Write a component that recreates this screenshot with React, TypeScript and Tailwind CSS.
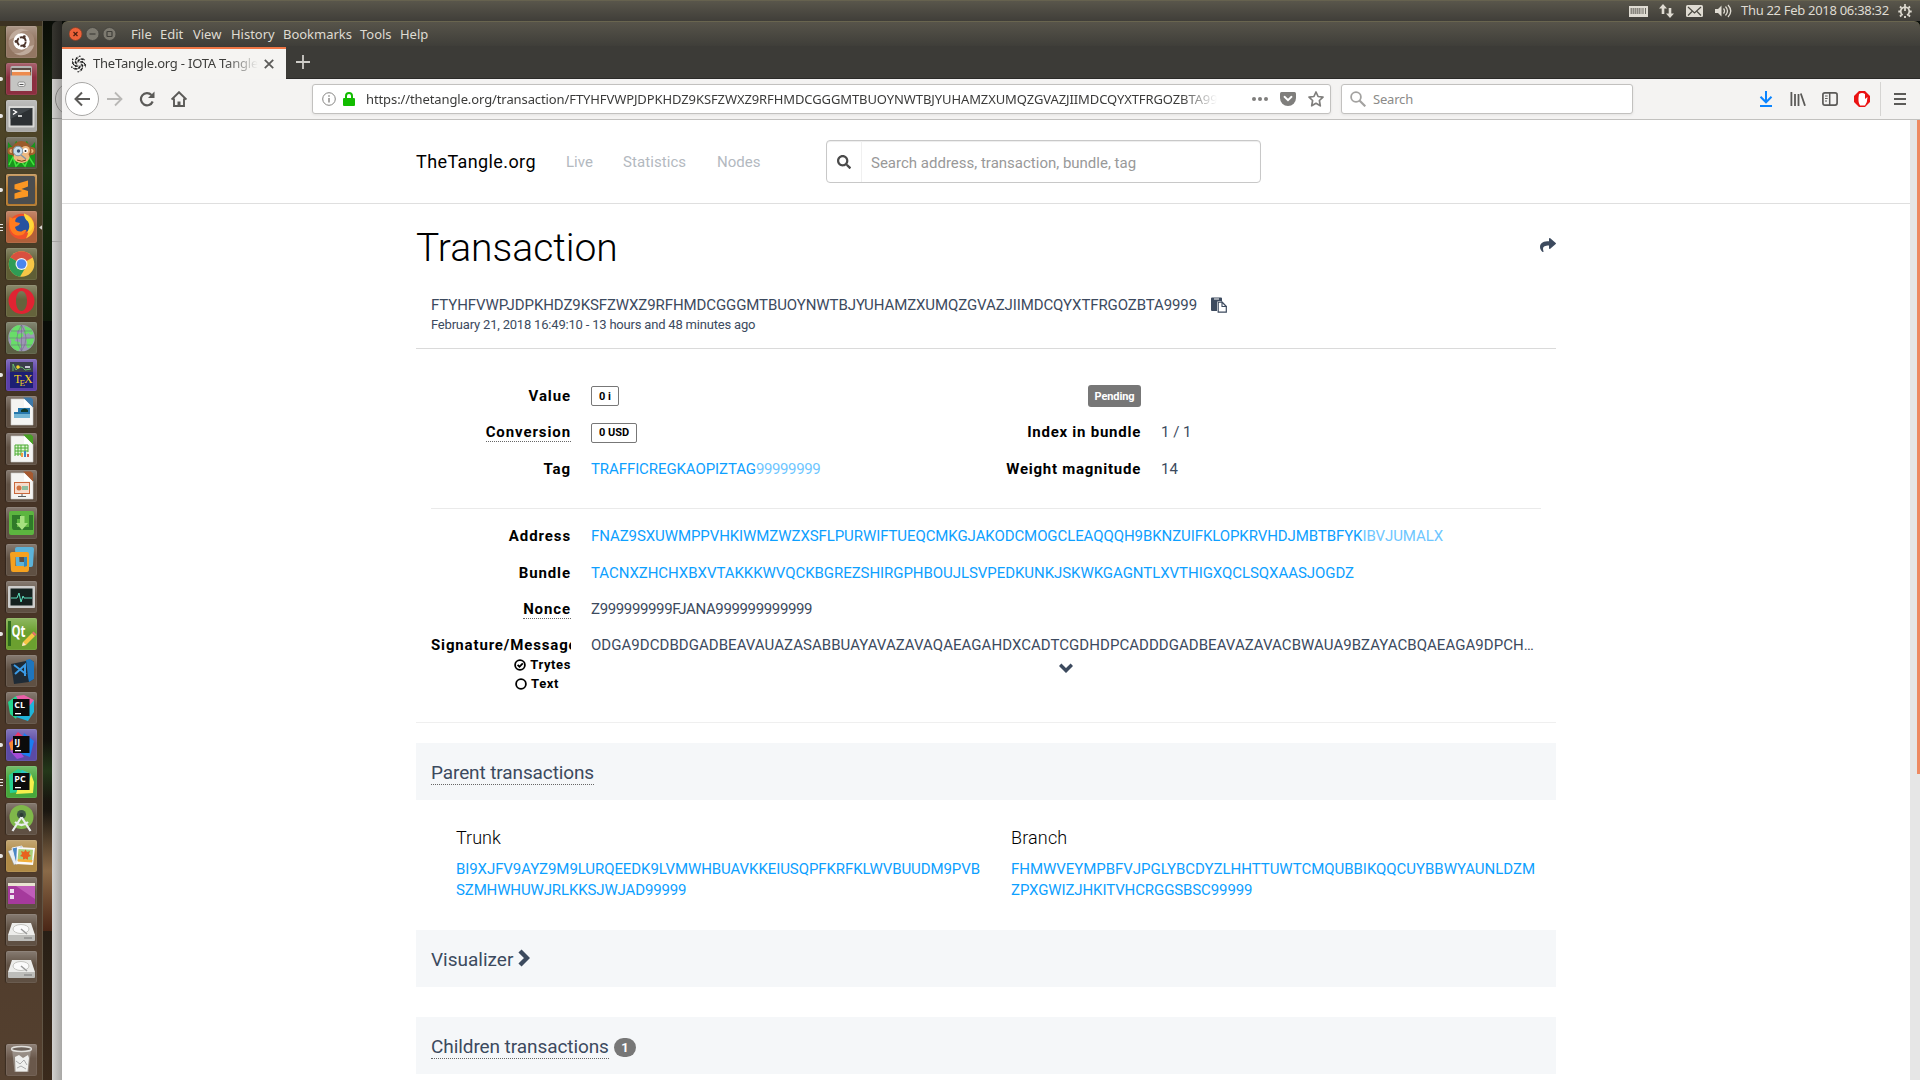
import React from "react";
import { FaSearch, FaShare } from "react-icons/fa";

const HASH = "FTYHFVWPJDPKHDZ9KSFZWXZ9RFHMDCGGGMTBUOYNWTBJYUHAMZXUMQZGVAZJIIMDCQYXTFRGOZBTA9999";

/* ---------- launcher ---------- */

type Running = "none" | "one" | "many";
type LauncherItem = { name: string; bg: string; running?: Running; art: React.ReactNode };

const glass = "bg-[#5f5043]";

const Doc = ({ fold, children }: { fold: string; children: React.ReactNode }) => (
  <>
    <path d="M5 3h14l8 8v18H5z" fill="#f4f4f2" stroke="#c9c9c6" strokeWidth=".6" />
    <path d="M17 1.500l10 10V3.500L25 1.500z" fill={fold} />
    <path d="M18 3v8h8z" fill="#fff" />
    {children}
  </>
);

const Disk = () => (
  <>
    <path d="M6 9h19l4 12H2z" fill="#ececea" />
    <path d="M2 21h27v5q0 1-1 1H3q-1 0-1-1z" fill="#bdbdba" />
    <ellipse cx="15" cy="15" rx="8" ry="4.500" fill="#fafafa" stroke="#c4c4c0" />
    <path d="M15 15l6 5" stroke="#999" strokeWidth="1.500" />
    <path d="M18 24h8" stroke="#777" />
  </>
);

const JetBox = ({ label }: { label: string }) => (
  <>
    <rect x="7" y="7" width="16.500" height="17" fill="#0b0b0b" />
    <text x="8.300" y="15.500" fontSize="9" fontWeight="700" fontFamily="Open Sans, sans-serif" fill="#fff">
      {label}
    </text>
    <rect x="9" y="21" width="6" height="1.300" fill="#fff" />
  </>
);

const launcher: LauncherItem[] = [
  {
    name: "Dash", bg: "bg-[#927662]",
    art: (
      <>
        <circle cx="15.500" cy="16" r="13" fill="#a58b79" />
        <path d="M3 14a13 13 0 0 1 20-9q-9-1-12 5zM28 19a13 13 0 0 1-20 8q10 1 13-6z" fill="#bfab9c" />
        <circle cx="15.500" cy="15.500" r="8.200" fill="#fff" />
        <circle cx="15.500" cy="15.500" r="4.200" fill="none" stroke="#4c352c" strokeWidth="1.900" strokeDasharray="7.600 1.200" />
        <circle cx="10" cy="15.500" r="1.400" fill="#4c352c" />
        <circle cx="18.300" cy="10.700" r="1.400" fill="#4c352c" />
        <circle cx="18.300" cy="20.300" r="1.400" fill="#4c352c" />
      </>
    ),
  },
  {
    name: "Files", bg: "bg-[#8c2f40]", running: "one",
    art: (
      <>
        <rect x="4.500" y="3" width="21.500" height="25" rx="1.500" fill="#b4b4b2" />
        <rect x="5.500" y="5" width="19.500" height="9" fill="#5a4a42" />
        <path d="M6 7h18v2H6z" fill="#f5e9dd" />
        <path d="M6 9h18.500v5H6z" fill="#ee8b4d" />
        <path d="M4.500 12.500h21.500V28H4.500z" fill="#c5c5c3" />
        <rect x="12" y="19" width="7" height="4.500" rx="1.500" fill="#f4f4f4" stroke="#7c7c7a" strokeWidth=".8" />
        <path d="M13.500 21.500h4" stroke="#555" />
      </>
    ),
  },
  {
    name: "Terminal", bg: "bg-[#a9a9a7]", running: "one",
    art: (
      <>
        <rect x="2.500" y="6" width="26" height="21.500" rx="1" fill="#d8d8d6" />
        <rect x="4.500" y="8" width="22" height="17.500" fill="#2c3033" />
        <path d="M4.500 8h22l-22 11z" fill="#41464a" />
        <path d="M7 10l3.500 2L7 14.500M12 16h4" stroke="#fff" strokeWidth="1.400" fill="none" />
      </>
    ),
  },
  {
    name: "Monkey", bg: "bg-[#565240]",
    art: (
      <>
        <path d="M2 30V5l5 6 3-7 5 4 6-4 3 7 5-6v25z" fill="#18951c" />
        <path d="M3 28l4-8 3 9 5-5 4 5 4-9 5 8" fill="none" stroke="#42e33e" strokeWidth="1.500" />
        <circle cx="5.500" cy="14" r="4" fill="#a4622e" />
        <circle cx="5.500" cy="14" r="2" fill="#edb981" />
        <circle cx="25.500" cy="14" r="4" fill="#a4622e" />
        <circle cx="25.500" cy="14" r="2" fill="#edb981" />
        <circle cx="15.500" cy="14" r="10" fill="#9b5b2a" />
        <circle cx="19.500" cy="13.500" r="4.500" fill="#edb981" />
        <ellipse cx="15.500" cy="20" rx="8" ry="6" fill="#edb981" />
        <circle cx="12" cy="14" r="4.800" fill="#c9dcea" stroke="#7f93a3" />
        <path d="M15 18l5 4" stroke="#7f93a3" strokeWidth="1.400" />
        <circle cx="19.500" cy="13.500" r="2.500" fill="#fff" />
        <circle cx="12.500" cy="14" r="1.700" fill="#3c5070" />
        <circle cx="19.500" cy="14" r="1" fill="#222" />
        <path d="M11 23q5 2.500 9 0" stroke="#7b3b18" fill="none" />
      </>
    ),
  },
  {
    name: "Sublime", bg: "bg-[#b57a2f]", running: "one",
    art: (
      <>
        <rect x="2" y="2" width="27" height="28" rx="1.500" fill="#4b4d4f" />
        <path d="M8.500 10.500L22 6.500v6l-6.500 2.500 6.500 2v5.500L8.500 25v-5.500L16 17l-7.500-2z" fill="#fb9723" />
      </>
    ),
  },
  {
    name: "Firefox", bg: "bg-[#b0603a]", running: "many",
    art: (
      <>
        <circle cx="15.500" cy="15.500" r="12.800" fill="#f0502a" />
        <path d="M18 2.500q10.500 3 10.300 13.500-.6 8-8.300 11.500 4-8 2-14z" fill="#ffc02e" />
        <circle cx="16" cy="13.500" r="8.500" fill="#27529f" />
        <path d="M3.500 6q2 .5 3 1.500 2-1 4.500-1-2.500 2-1.500 4.500l4.500 1-1 2-4 2q1 5 6.500 4.500 3-2.500 5-1.500-2 6-9 5.500Q2 23 3.500 6z" fill="#ff7b1d" />
        <path d="M18 2.500q0 5 4 8 3 5-1 11.500 6-2.500 6.500-9-2-7-9.500-10.500z" fill="#ffd739" />
      </>
    ),
  },
  {
    name: "Chrome", bg: "bg-[#5f5e35]",
    art: (
      <>
        <circle cx="15.500" cy="16" r="12.800" fill="#f6c646" />
        <path d="M15.500 16L4.400 9.600a12.800 12.800 0 0 1 22.200 0z" fill="#d95040" />
        <path d="M15.500 16L4.400 9.600a12.800 12.800 0 0 0 9.600 19.100l6-10z" fill="#2f9c55" />
        <circle cx="15.500" cy="16" r="6" fill="#f3f3f3" />
        <circle cx="15.500" cy="16" r="4.800" fill="#4a85ee" />
      </>
    ),
  },
  {
    name: "Opera", bg: "bg-[#65633c]",
    art: (
      <path fillRule="evenodd" d="M15.500 3a13 13 0 1 0 .01 0zM15.500 6c3.500 0 5.500 4.500 5.500 10s-2 10-5.500 10S10 21.500 10 16s2-10 5.500-10z" fill="#e02332" />
    ),
  },
  {
    name: "Globe", bg: "bg-[#5c6045]",
    art: (
      <>
        <circle cx="15.500" cy="16" r="13.300" fill="#9d97b4" />
        <path d="M3.500 12q3-8 9-9l4 2-2 3-4 1 1 3 5-1 1 3-4 3-3-1-2 3 5 1 2 4-3 5q-5-1-8-6l1-4-2-3zM18 4q8 1 9.500 8l-3 1-2-2-3 2-2-3 2-2zM20 17l8-1q0 7-6 10.500l-2-3 1-3z" fill="#69dd69" />
        <path d="M2.500 16h26M5 9h21M5 23h21M15.500 3v26M15.500 3q-9 13 0 26M15.500 3q9 13 0 26" stroke="#6d6782" strokeWidth=".5" fill="none" />
      </>
    ),
  },
  {
    name: "TeX", bg: "bg-[#5a3fa8]", running: "one",
    art: (
      <>
        <rect x="4" y="3" width="23" height="26" fill="#1c1f74" />
        <rect x="4" y="3" width="23" height="10" fill="#3a3f4b" />
        <path d="M7 12V5l3 6q5-6 9 0l6-1" stroke="#72d572" strokeWidth=".8" fill="none" />
        <circle cx="12" cy="8" r="1.800" fill="#f0d02c" />
        <path d="M19 7h5v2h-5z" fill="#c8c8d8" />
        <text x="8" y="24" fontFamily="Liberation Serif, serif" fontSize="12" fill="#f2d21e">T</text>
        <text x="13.500" y="27" fontFamily="Liberation Serif, serif" fontSize="9" fill="#f2d21e">E</text>
        <text x="18" y="24" fontFamily="Liberation Serif, serif" fontSize="12" fill="#f2d21e">X</text>
      </>
    ),
  },
  {
    name: "Draw", bg: glass,
    art: (
      <Doc fold="#3d78a8">
        <path d="M12 12h12v9H8v-5h4z" fill="#2678ad" />
        <path d="M8 18h16v4H8z" fill="#74b6d4" />
        <path d="M15 14q4-3 7 0v2h-7z" fill="#113b2c" />
      </Doc>
    ),
  },
  {
    name: "Calc", bg: glass,
    art: (
      <Doc fold="#47a024">
        <path d="M9 12h13v10H9z" fill="#e2f5d9" />
        <path d="M9 12h13M9 15h13M9 18h13M9 21h8M9 12v11M12 12v11M15 12v11M19 12v7M22 12v7" stroke="#4cac32" strokeWidth="1" />
        <path d="M15 20h2v4h-2z" fill="#f29b42" />
        <path d="M18 18h2v6h-2z" fill="#3b88c3" />
        <path d="M21 21h2v3h-2z" fill="#d85a4a" />
      </Doc>
    ),
  },
  {
    name: "Impress", bg: glass,
    art: (
      <Doc fold="#a5592f">
        <rect x="8.500" y="12.500" width="15" height="11" fill="#f6dccd" stroke="#c9683c" />
        <circle cx="13" cy="18" r="2.500" fill="#d07443" />
        <path d="M16 16h6v4h-6z" fill="#8fbfa0" />
        <path d="M16 24v2M12 26.500h8" stroke="#5c5c5c" />
      </Doc>
    ),
  },
  {
    name: "Downloads", bg: glass,
    art: (
      <>
        <rect x="3" y="4" width="25" height="24" rx="2" fill="#5cb53f" />
        <path d="M6 8h9v4h-4v8h12V8h4v15H8q-2 0-2-3z" fill="#2f7a29" />
        <path d="M14 9h4.500v7H22l-6 7-6-7h4z" fill="#a6e07f" />
      </>
    ),
  },
  {
    name: "Virtual machines", bg: glass,
    art: (
      <>
        <path fillRule="evenodd" d="M11 3h15q2 0 2 2l-1 16q0 2-2 2H12q-2 0-2-2l-1-16q0-2 2-2zM13 10l.5 8H21l.5-8z" fill="#5cb2d8" />
        <path fillRule="evenodd" d="M6 8h15q2 0 2 2v15q0 3-2 3H7q-2 0-2-2L4 10q0-2 2-2zM9.500 13v9H18v-9z" fill="#f5a11f" />
        <path d="M18 13h3v9l-3 1z" fill="#3188bb" />
      </>
    ),
  },
  {
    name: "Monitor", bg: glass,
    art: (
      <>
        <rect x="2" y="5" width="27" height="22" rx="1" fill="#cdcdcb" />
        <rect x="4.500" y="7.500" width="22" height="17" fill="#15211f" />
        <path d="M5 17h6l2-5 2 9 2-6 1 2h8" stroke="#5fe0bf" fill="none" />
      </>
    ),
  },
  {
    name: "Qt Creator", bg: "bg-[#6ba02f]", running: "one",
    art: (
      <>
        <path d="M2 3h3v25H2z" fill="#2e6a1d" />
        <text x="5.500" y="19" fontFamily="Open Sans, sans-serif" fontSize="16" fontWeight="700" fill="#fff" textLength="14" lengthAdjust="spacingAndGlyphs">Qt</text>
        <path d="M17 24l9-9 3 3-9 9-4 1z" fill="#f6c544" />
        <path d="M26 15l1.500-1.500 3 3L29 18z" fill="#e86f6f" />
        <path d="M17 24l3 3-4 1z" fill="#f7e5c5" />
      </>
    ),
  },
  {
    name: "Code", bg: glass,
    art: (
      <>
        <path d="M5 9l20-4 3 2v17l-5 3-15 2z" fill="#1f2b36" />
        <path d="M20 5l4-1 4 3v17l-5 3-1-5z" fill="#1e75bd" />
        <path d="M8 10l12 9M9 19l10-9v11" stroke="#3b9be6" strokeWidth="2" fill="none" />
      </>
    ),
  },
  {
    name: "CLion", bg: glass,
    art: (
      <>
        <path d="M2 10l8-6 8 3-8 20-6-5z" fill="#22d48d" />
        <path d="M10 4l8-1 10 5-2 9-12-4z" fill="#ea5fa8" />
        <path d="M28 8v12l-6 9-12-4 14-12z" fill="#1fb4da" />
        <JetBox label="CL" />
      </>
    ),
  },
  {
    name: "IntelliJ", bg: "bg-[#5b4aa5]", running: "one",
    art: (
      <>
        <path d="M3 14l9-11 7 6-8 19z" fill="#e8386b" />
        <path d="M3 14l6-4v10l-4 2z" fill="#f78a33" />
        <path d="M18 4l10 8-4 16-11-4z" fill="#1a7df0" />
        <path d="M4 22l8-2 6 8-7 2z" fill="#a44bd8" />
        <JetBox label="IJ" />
      </>
    ),
  },
  {
    name: "PyCharm", bg: "bg-[#47a83b]", running: "many",
    art: (
      <>
        <path d="M3 9l9-6 8 3-6 20-10 1z" fill="#25cf92" />
        <path d="M17 5l8 3 3 8-1 11-17 1z" fill="#f5f04c" />
        <path d="M16 4l9 4-2 8-11-4z" fill="#2cc5c0" />
        <JetBox label="PC" />
      </>
    ),
  },
  {
    name: "Android Studio", bg: glass,
    art: (
      <>
        <circle cx="15.500" cy="14" r="12" fill="#7fb84a" />
        <circle cx="15.500" cy="11.500" r="4.500" fill="#3f5a44" />
        <path d="M15.500 14l-9 14M15.500 14l9 14M9 19q6.500 6 13 0" stroke="#e9ecee" strokeWidth="2.200" fill="none" />
        <circle cx="15.500" cy="12" r="2" fill="#2b3b33" />
      </>
    ),
  },
  {
    name: "Photos", bg: "bg-[#b08a45]", running: "one",
    art: (
      <>
        <path d="M2 11l8-3 5 14-7 3z" fill="#e8edf2" stroke="#8a8a80" strokeWidth=".5" />
        <path d="M6 8l10-2 3 16-9 2z" fill="#4a86c5" stroke="#eee" />
        <path d="M11 7l18 1-2 17-17-1z" fill="#fafafa" />
        <path d="M12.500 9l14.500.8-1 12-14.500-.8z" fill="#a8cf7a" />
        <path d="M19.500 9.500l1.500 2.500 3-1-1 3 2 2-3 1v3l-2.500-1.500L17 20v-3l-3-1 2-2-1-3 3 1z" fill="#e8621f" />
        <path d="M12 19l14.500 1-.3 2.500-14.500-1z" fill="#f4b13b" />
      </>
    ),
  },
  {
    name: "Workspaces", bg: glass,
    art: (
      <>
        <rect x="2" y="6" width="27" height="21" fill="#a53a9c" />
        <path d="M2 6h27v3H2z" fill="#e9e4d2" />
        <path d="M10 9h19v13z" fill="#c05cb8" />
        <path d="M4 12h4v4H4zM4 18h4v4H4z" fill="#ece1ee" />
      </>
    ),
  },
  { name: "Disk 1", bg: glass, art: <Disk /> },
  { name: "Disk 2", bg: glass, art: <Disk /> },
];

const Trash = () => (
  <>
    <path d="M6 5h19l-2.500 23h-14z" fill="#a79f98" opacity=".7" />
    <path d="M9 13l4-2 4 3 5-3 1 3-1.500 13.500h-12z" fill="#efefed" />
    <path d="M10 17l4 3 4-4 3 5M11 24l4-2 5 3" stroke="#aaa" fill="none" />
    <ellipse cx="15.500" cy="5" rx="10" ry="2.500" fill="#6d625a" stroke="#e2e0dc" strokeWidth="1.400" />
  </>
);

function Tile({ item, className = "" }: { item: LauncherItem; className?: string }) {
  return (
    <div className={`flex h-8 shrink-0 items-center ${className}`}>
      <div className="flex w-[6px] shrink-0 flex-col justify-center gap-[2px]">
        {item.running === "one" && <div className="h-[4px] w-[3px] rounded-r-full bg-[#e8e6e3]" />}
        {item.running === "many" &&
          [0, 1, 2].map((i) => <div key={i} className="h-[1px] w-[3px] bg-[#e8e6e3]" />)}
      </div>
      <div className={`h-8 w-[31px] shrink-0 overflow-hidden rounded-[2px] shadow-[inset_0_0_0_1px_rgba(255,255,255,0.07),-1px_0_1px_rgba(0,0,0,0.3)] ${item.bg}`}>
        <svg viewBox="0 0 31 32" className="h-8 w-[31px] bg-linear-to-b from-white/25 to-transparent to-45%">{item.art}</svg>
      </div>
      {item.name === "Firefox" && (
        <svg viewBox="0 0 4 6" className="ml-[2px] h-[5px] w-[3px]"><path d="M4 0v6L0 3z" fill="#dcd9d4" /></svg>
      )}
    </div>
  );
}

function Launcher() {
  return (
    <div className="flex w-[43px] shrink-0 flex-col border-r border-[#6c6556]/60 bg-linear-to-b from-[#3c3222] via-[#473426] to-[#54402f] pt-[5px]">
      <div className="flex h-[957px] flex-col gap-[5px] bg-linear-to-b from-[#6a6531]/50 via-[#55502a]/30 via-25% to-transparent to-40%">
        {launcher.map((item) => <Tile key={item.name} item={item} />)}
      </div>
      <Tile item={{ name: "Trash", bg: "bg-[#6a584b]", art: <Trash /> }} className="mt-[61px]" />
    </div>
  );
}

/* ---------- desktop top panel ---------- */

function TopPanel() {
  return (
    <div className="flex h-[21px] shrink-0 items-center border-t border-[#66624f] bg-linear-to-b from-[#59564b] to-[#403e39] pl-[1629px] font-['Noto_Sans',sans-serif] text-[13px] text-[#dfdbd2]">
      <svg viewBox="0 0 19 11" className="h-[11px] w-[19px]">
        <rect width="19" height="11" fill="#dfdbd2" />
        <path d="M1.500 3h11M1.500 5h11M1.500 7h11" stroke="#6b6961" strokeWidth="1.300" strokeDasharray="1.500 .5" />
        <path d="M14 2v6M16.500 2v6" stroke="#6b6961" strokeWidth="1" />
      </svg>
      <svg viewBox="0 0 15 14" className="ml-[11px] h-[14px] w-[15px]" fill="#dfdbd2">
        <path d="M4 0l4 4.500H5.300V10H2.700V4.500H0zM11 14l-4-4.500h2.700V4h2.600v5.500H15z" />
      </svg>
      <svg viewBox="0 0 17 12" className="ml-[12px] h-3 w-[17px]">
        <rect width="17" height="12" rx="1.500" fill="#dfdbd2" />
        <path d="M2 2l6.500 6L15 2M2 10.500l4-4M15 10.500l-4-4" stroke="#4b4942" strokeWidth="1.200" fill="none" />
      </svg>
      <svg viewBox="0 0 17 14" className="ml-[12px] h-[14px] w-[17px]" fill="none" stroke="#dfdbd2" strokeWidth="1.300">
        <path d="M0 5h3l3.500-3.500v11L3 9H0z" fill="#dfdbd2" stroke="none" />
        <path d="M8.500 4.500q2 2.500 0 5M10.500 2.500q4 4.500 0 9M13 1q5.500 6 0 12" />
      </svg>
      <span className="ml-[9px] w-[164px] tracking-[-0.3px] whitespace-nowrap">Thu 22 Feb 2018 06:38:32</span>
      <svg viewBox="0 0 14 14" className="-ml-[7px] size-[14px]" fill="none" stroke="#dfdbd2">
        <circle cx="7" cy="7.500" r="4.300" strokeWidth="1.700" strokeDasharray="22.500 4.500" strokeDashoffset="-9" />
        <path d="M7 0v7" strokeWidth="1.700" />
        <path d="M.3 7.500h2M11.700 7.500h2M2 2.500l1.500 1.500M12 2.500L10.500 4M2 12.500L3.500 11M12 12.500L10.500 11M7 12v2" strokeWidth="1.800" />
      </svg>
    </div>
  );
}

/* ---------- browser chrome ---------- */

const faviconDots = Array.from({ length: 46 }, (_, i) => {
  const arm = i % 6;
  const step = Math.floor(i / 6);
  const a = (arm * Math.PI) / 3 + step * 0.24;
  const r = 2.2 + step * 0.8;
  return { x: 8 + Math.cos(a) * r, y: 8 + Math.sin(a) * r, r: 0.55 + (step % 3) * 0.22 };
});

const menus: [string, string][] = [
  ["File", "w-[29px]"], ["Edit", "w-[33px]"], ["View", "w-[38px]"], ["History", "w-[52px]"],
  ["Bookmarks", "w-[77px]"], ["Tools", "w-10"], ["Help", "w-10"],
];

function TitleBar() {
  return (
    <div className="flex h-[25px] items-center rounded-t-[6px] border-t border-[#69654f] bg-linear-to-b from-[#57544a] to-[#3f3e39] pl-[7px]">
      <svg viewBox="0 0 50 14" className="h-[14px] w-[50px]" fill="none">
        <circle cx="6.500" cy="7" r="6.500" fill="#ee6239" stroke="#83402a" strokeWidth=".8" />
        <path d="M4.500 5l4 4M8.500 5l-4 4" stroke="#4d2010" strokeWidth="1.200" />
        <circle cx="23.500" cy="7" r="6.500" fill="#7d7a70" stroke="#44423d" strokeWidth=".8" />
        <path d="M20.500 7h6" stroke="#403f3a" strokeWidth="1.200" />
        <circle cx="40.500" cy="7" r="6.500" fill="#7d7a70" stroke="#44423d" strokeWidth=".8" />
        <rect x="38" y="4.500" width="5" height="5" rx=".5" stroke="#403f3a" strokeWidth="1.200" />
      </svg>
      <div className="ml-3 flex font-['Noto_Sans',sans-serif] text-[13px] leading-5 tracking-[-0.02px] text-[#dfdbd2]">
        {menus.map(([label, width]) => <span key={label} className={width}>{label}</span>)}
      </div>
    </div>
  );
}

function TabBar() {
  return (
    <div className="flex h-[33px] bg-[#3c3b37] shadow-[inset_0_-1px_0_#2b2a28]">
      <div className="mt-px flex w-[224px] items-center border-t-2 border-[#f07746] bg-[#f5f4f2] pl-[9px]">
        <svg viewBox="0 0 16 16" className="size-4 overflow-visible" fill="#1a1a1a">
          {faviconDots.map((d, i) => <circle key={i} cx={d.x} cy={d.y} r={d.r} />)}
        </svg>
        <div className="ml-[6px] w-[165px] mask-r-from-80% mask-r-to-100% font-['Noto_Sans',sans-serif] text-[13px] tracking-[-0.21px] whitespace-nowrap text-[#3d3d3b]">
          TheTangle.org - IOTA Tangle
        </div>
        <svg viewBox="0 0 10 10" className="ml-[6px] size-[10px]"><path d="M.8.8l8.400 8.400M9.200.8L.8 9.200" stroke="#5c5b59" strokeWidth="1.800" /></svg>
      </div>
      <svg viewBox="0 0 14 14" className="mt-[9px] ml-[10px] size-[14px]"><path d="M7 0v14M0 7h14" stroke="#cfcdc8" strokeWidth="1.800" /></svg>
    </div>
  );
}

function NavBar() {
  return (
    <div className="flex h-[41px] items-center border-b border-[#c2c1bf] bg-[#f4f3f2] pl-[3px] font-['Noto_Sans',sans-serif] text-[13px]">
      <div className="flex size-[34px] items-center justify-center rounded-full border border-[#a9a8a6] bg-white">
        <svg viewBox="0 0 16 16" className="size-4" fill="none" stroke="#5b5a58" strokeWidth="2"><path d="M16 8H1.500M8 1.500L1.500 8 8 14.500" /></svg>
      </div>
      <svg viewBox="0 0 16 16" className="ml-2 size-4" fill="none" stroke="#b9b8b6" strokeWidth="1.800"><path d="M0 8h14.500M8 1.500L14.500 8 8 14.500" /></svg>
      <svg viewBox="0 0 16 16" className="ml-4 size-4" fill="none" stroke="#5b5a58" strokeWidth="2.200">
        <path d="M13.700 10.500A6.100 6.100 0 1 1 12.500 4" /><path d="M15.500.5v6.500H9z" fill="#5b5a58" stroke="none" />
      </svg>
      <svg viewBox="0 0 16 16" className="ml-4 size-4" fill="none" stroke="#5b5a58" strokeWidth="1.900">
        <path d="M.6 8.500L8 1.200l7.400 7.300M3 7.500V15h10V7.500" /><path d="M8 15v-4.500" strokeWidth="3" />
      </svg>

      <div className="ml-[125px] flex h-[30px] w-[1019px] items-center rounded-[3px] border border-[#c2c1bf] bg-white pl-[9px] shadow-[0_1px_3px_rgba(0,0,0,0.07)]">
        <svg viewBox="0 0 14 14" className="size-[14px]" fill="none" stroke="#858482"><circle cx="7" cy="7" r="6.300" /><path d="M7 6v4.500M7 3.200v1.500" strokeWidth="1.400" /></svg>
        <svg viewBox="0 0 12 14" className="ml-[7px] h-[14px] w-3"><rect y="6" width="12" height="8" rx="1" fill="#12bc00" /><path d="M3 7V4a3 3 0 0 1 6 0v3" fill="none" stroke="#12bc00" strokeWidth="2" /></svg>
        <div className="ml-[11px] w-[851px] mask-r-from-[815px] mask-r-to-[851px] pt-px tracking-[-0.1px] whitespace-nowrap text-[#3b3b3a]">
          {"https://thetangle.org/transaction/" + HASH.slice(0, 79)}
        </div>
        <svg viewBox="0 0 16 4" className="ml-[35px] h-1 w-4" fill="#7f7e7c"><circle cx="2" cy="2" r="2" /><circle cx="8" cy="2" r="2" /><circle cx="14" cy="2" r="2" /></svg>
        <svg viewBox="0 0 16 14" className="ml-[12px] h-[14px] w-4"><path d="M1.500 0h13Q16 0 16 1.500V6A8 8 0 0 1 0 6V1.500Q0 0 1.500 0z" fill="#7f7e7c" /><path d="M4.500 4.800L8 8.200l3.500-3.400" stroke="#fff" strokeWidth="1.900" fill="none" strokeLinecap="round" /></svg>
        <svg viewBox="0 0 16 16" className="ml-[12px] size-4" fill="none" stroke="#7f7e7c" strokeWidth="1.700" strokeLinejoin="round"><path d="M8 1l2.100 4.500 4.900.6-3.600 3.400.9 5.300L8 12.300l-4.300 2.500.9-5.300L1 6.100l4.900-.6z" /></svg>
      </div>

      <div className="ml-[10px] flex h-[30px] w-[292px] items-center rounded-[3px] border border-[#c2c1bf] bg-white pl-2 tracking-[-0.19px] text-[#8b8a88] shadow-[0_1px_3px_rgba(0,0,0,0.07)]">
        <svg viewBox="0 0 16 16" className="size-4" fill="none" stroke="#a3a2a0"><circle cx="6" cy="6" r="4.900" strokeWidth="1.800" /><path d="M9.500 9.500l5.800 5.800" strokeWidth="2.200" /></svg>
        <span className="ml-[7px] pt-px">Search</span>
      </div>

      <svg viewBox="0 0 14 16" className="ml-[126px] h-4 w-[14px]" fill="none" stroke="#0a84ff" strokeWidth="2"><path d="M7 0v11M1.500 5.800L7 11.300l5.500-5.500M1 15h12" /></svg>
      <svg viewBox="0 0 16 14" className="ml-[17px] h-[14px] w-4" stroke="#5b5a58" strokeWidth="1.800"><path d="M1.400 0v14M5 2v12M8.500 2v12M10.800 1.500L15 13.800" /></svg>
      <svg viewBox="0 0 16 14" className="ml-[16px] h-[14px] w-4" fill="none" stroke="#5b5a58" strokeWidth="1.700"><rect x=".9" y=".9" width="14.200" height="12.200" rx="2" /><path d="M7.700 1v12" strokeWidth="1.500" /><path d="M3 4h2.700M3 6.500h2.700M3 9h2" strokeWidth="1" /></svg>
      <svg viewBox="0 0 16 16" className="ml-[16px] size-4"><path d="M5 0h6l5 5v6l-5 5H5l-5-5V5z" fill="#ea1212" /><path d="M5 3Q8 .8 11 3v5l2.500-2q0 5-2.500 8.500H6Q3.500 11 5 3z" fill="#fff" /></svg>
      <div className="ml-[10px] h-[34px] w-px bg-[#d5d4d2]" />
      <svg viewBox="0 0 12 12" className="ml-[13px] size-3" stroke="#5b5a58" strokeWidth="1.900"><path d="M0 1h12M0 6h12M0 11h12" /></svg>
    </div>
  );
}

/* ---------- page ---------- */

const CopyIcon = () => (
  <svg viewBox="0 0 16 16" className="ml-[14px] size-4">
    <path fillRule="evenodd" d="M1 .5h9q1 0 1 1V4H7.500Q6 4 6 5.500V14H1q-1 0-1-1V1.500Q0 .5 1 .5zM3 1.500v1h5v-1z" fill="currentColor" />
    <path d="M7.200 5.200H11L15.300 9.500v5.700H7.200z" fill="#fff" stroke="currentColor" strokeWidth="1.200" />
    <path d="M11 5.200v4.300h4.300z" fill="#fff" stroke="currentColor" strokeWidth="1.100" />
  </svg>
);

const labelCls = "w-[140px] shrink-0 text-right text-[15px] font-bold text-black";

function Row({ label, dotted, children, className = "h-9" }: { label: string; dotted?: boolean; children: React.ReactNode; className?: string }) {
  return (
    <div className={`flex items-center gap-5 ${className}`}>
      <div className={`${labelCls} tracking-[0.9px]`}>
        <span className={dotted ? "border-b border-dotted border-[#666]" : ""}>{label}</span>
      </div>
      {children}
    </div>
  );
}

function RightRow({ label, children, className = "h-9" }: { label: string; children?: React.ReactNode; className?: string }) {
  return (
    <div className={`flex items-center gap-5 ${className}`}>
      <div className="w-[170px] text-right text-[15px] font-bold tracking-[0.75px] text-black">{label}</div>
      <div>{children}</div>
    </div>
  );
}

function Page() {
  return (
    <div className="flex h-[960px] bg-white">
      <div className="w-[1848px] overflow-hidden font-[Roboto,sans-serif] text-[15px] text-[#3c4a5e]">
        <header className="flex h-[84px] items-center border-b border-[#dfdfdf] pl-[354px] text-[#b3b9bf]">
          <div className="w-[150px] text-[18px] tracking-[0.4px] text-black">TheTangle.org</div>
          <div className="w-[57px] pt-[2px]">Live</div>
          <div className="w-[94px] pt-[2px] tracking-[0.07px]">Statistics</div>
          <div className="w-[109px] pt-[2px] tracking-[0.05px]">Nodes</div>
          <div className="flex h-[43px] w-[435px] items-center rounded-[4px] border border-[#c8c8c8] bg-white shadow-[inset_0_1px_1px_rgba(0,0,0,0.075)]">
            <div className="flex h-full w-[35px] items-center justify-center border-r border-[#f0f0f0]">
              <FaSearch className="size-[14px] text-[#4a4a4a]" />
            </div>
            <div className="pt-[3px] pl-[9px] text-[#999]">Search address, transaction, bundle, tag</div>
          </div>
        </header>

        <main className="ml-[354px] w-[1140px]">
          <div className="flex h-[87px] items-center justify-between">
            <h1 className="pt-[2px] text-[39px] font-light tracking-[-0.02px] text-black">Transaction</h1>
            <FaShare className="mt-[-5px] size-4" />
          </div>
          <div className="border-b border-[#dadada] pb-[17px] pl-[15px]">
            <div className="flex h-7 items-center tracking-[-0.095px]">
              {HASH}
              <CopyIcon />
            </div>
            <div className="text-[13px] leading-3 tracking-[-0.195px]">February 21, 2018 16:49:10 - 13 hours and 48 minutes ago</div>
          </div>

          <section className="border-b border-[#efefef] px-[15px] pt-[29px] pb-[29px]">
            <div className="flex border-b border-[#eaeaea] pb-[21px]">
              <div className="w-[540px]">
                <Row label="Value">
                  <span className="flex h-[20px] items-center rounded-[2px] border border-[#777] px-[7px] pt-[2px] text-[11px] font-bold text-black">0 i</span>
                </Row>
                <Row label="Conversion" dotted className="h-[37px]">
                  <span className="flex h-[20px] items-center rounded-[2px] border border-[#777] px-[7px] pt-[2px] text-[11px] font-bold text-black">0 USD</span>
                </Row>
                <Row label="Tag">
                  <div className="tracking-[-0.087px] text-[#0da0ff]">TRAFFICREGKAOPIZTAG<span className="tracking-[-0.4px] text-[#6ec6ff]">99999999</span></div>
                </Row>
              </div>
              <div>
                <div className="flex h-9 w-[170px] items-center justify-end">
                  <span className="flex h-[22px] w-[53px] items-center justify-center rounded-[3px] bg-[#777] pt-[3px] text-[11px] font-bold tracking-[-0.1px] text-white">Pending</span>
                </div>
                <RightRow label="Index in bundle" className="h-[37px]">1 / 1</RightRow>
                <RightRow label="Weight magnitude">14</RightRow>
              </div>
            </div>

            <div className="pt-[9px]">
              <Row label="Address">
                <div className="tracking-[-0.083px] whitespace-nowrap text-[#0da0ff]">
                  FNAZ9SXUWMPPVHKIWMZWZXSFLPURWIFTUEQCMKGJAKODCMOGCLEAQQQH9BKNZUIFKLOPKRVHDJMBTBFYK<span className="text-[#6ec6ff]">IBVJUMALX</span>
                </div>
              </Row>
              <Row label="Bundle" className="h-[38px]">
                <div className="tracking-[-0.055px] text-[#0da0ff]">TACNXZHCHXBXVTAKKKWVQCKBGREZSHIRGPHBOUJLSVPEDKUNKJSKWKGAGNTLXVTHIGXQCLSQXAASJOGDZ</div>
              </Row>
              <Row label="Nonce" dotted className="h-[35px]">
                <div className="tracking-[-0.36px]">Z999999999FJANA999999999999</div>
              </Row>
              <div className="flex gap-5 pt-2">
                <div className={`${labelCls} tracking-[0.85px]`}>
                  <div className="overflow-hidden text-left leading-5 whitespace-nowrap">Signature/Message</div>
                  <div className="flex h-[19px] items-center justify-end gap-[4px] text-[13px] tracking-[0.6px]">
                    <svg viewBox="0 0 12 12" className="size-3" fill="none" stroke="#000" strokeWidth="1.800"><circle cx="6" cy="6" r="4.900" /><path d="M3.600 5.800l1.900 1.900 3.300-3.300" /></svg>
                    Trytes
                  </div>
                  <div className="flex h-[19px] items-center justify-end gap-[4px] pr-3 text-[13px] tracking-[0.6px]">
                    <svg viewBox="0 0 12 12" className="size-3" fill="none" stroke="#000" strokeWidth="1.800"><circle cx="6" cy="6" r="4.900" /></svg>
                    Text
                  </div>
                </div>
                <div className="w-[950px] leading-5 tracking-[0.045px] whitespace-nowrap">
                  ODGA9DCDBDGADBEAVAUAZASABBUAYAVAZAVAQAEAGAHDXCADTCGDHDPCADDDGADBEAVAZAVACBWAUA9BZAYACBQAEAGA9DPCH…
                  <svg viewBox="0 0 14 10" className="mx-auto mt-[8px] h-[10px] w-[14px]" fill="none" stroke="currentColor" strokeWidth="3.400"><path d="M1.200 1.700L7 7.500l5.800-5.800" /></svg>
                </div>
              </div>
            </div>
          </section>

          <div className="mt-5 flex h-[57px] items-center bg-[#f5f7f9] pt-[3px] pl-[15px] text-[19px] tracking-[-0.11px]">
            <span className="border-b border-dotted border-[#666] leading-[23px]">Parent transactions</span>
          </div>
          <div className="flex pt-[26px] pl-[40px] leading-[21px] text-[#0da0ff]">
            <div className="w-[555px]">
              <div className="text-[18px] leading-6 font-light text-black">Trunk</div>
              <div className="mt-[9px] tracking-[-0.08px]">BI9XJFV9AYZ9M9LURQEEDK9LVMWHBUAVKKEIUSQPFKRFKLWVBUUDM9PVB<br /><span className="tracking-[-0.13px]">SZMHWHUWJRLKKSJWJAD99999</span></div>
            </div>
            <div>
              <div className="text-[18px] leading-6 font-light tracking-[0.15px] text-black">Branch</div>
              <div className="mt-[9px] tracking-[-0.03px]">FHMWVEYMPBFVJPGLYBCDYZLHHTTUWTCMQUBBIKQQCUYBBWYAUNLDZM<br /><span className="tracking-[-0.1px]">ZPXGWIZJHKITVHCRGGSBSC99999</span></div>
            </div>
          </div>
          <div className="mt-[29px] flex h-[57px] items-center bg-[#f5f7f9] pt-[3px] pl-[15px] text-[19px]">
            Visualizer
            <svg viewBox="0 0 12 18" className="ml-[5px] mb-[4px] h-[18px] w-3" fill="none" stroke="currentColor" strokeWidth="4.400"><path d="M2 2l7 7-7 7" /></svg>
          </div>
          <div className="mt-[30px] flex h-[57px] items-center bg-[#f5f7f9] pt-[3px] pl-[15px] text-[19px] tracking-[-0.08px]">
            <span className="border-b border-dotted border-[#666] leading-[23px]">Children transactions</span>
            <span className="mt-[1px] ml-[5px] flex h-[19px] w-[22px] items-center justify-center rounded-full bg-[#777] text-[13px] font-bold text-white">1</span>
          </div>
        </main>
      </div>
      <div className="w-[7px] bg-[#e6e6e6]" />
      <div className="w-[3px] bg-[#e6e6e6]"><div className="h-[654px] bg-[#ee8a62]" /></div>
    </div>
  );
}

export default function App() {
  return (
    <div className="flex h-[1080px] w-[1920px] flex-col overflow-hidden bg-[#0b0e0a]">
      <TopPanel />
      <div className="flex h-[1059px]">
        <Launcher />
        <div className="w-[9px] shrink-0 bg-linear-to-b from-[#0a0d07] via-[#090b09] via-60% to-[#3a2a1c]">
          <div className="h-[300px] bg-linear-to-b from-transparent via-[#1c3012] to-[#0f1a0b]" />
          <div className="mt-[420px] h-[60px] bg-linear-to-b from-transparent via-[#24381a] to-transparent" />
          <div className="mt-[10px] h-[120px] bg-linear-to-b from-transparent via-[#8a6a48] to-[#4a2616]" />
        </div>
        <div className="w-[10px] shrink-0">
          <div className="h-[58px] rounded-tl-[6px] bg-linear-to-r from-[#36352f] to-[#24231f]" />
          <div className="h-10 overflow-hidden border-b border-[#8f8f8d] bg-linear-to-r from-[#cfcecc] to-[#a3a2a0] pt-[3px] pl-[3px]">
            <div className="size-[34px] rounded-full border border-[#7f7e7c]" />
          </div>
          <div className="h-[123px] border-b border-[#a5a4a2] bg-linear-to-r from-[#d2d1cf] to-[#a8a7a5]" />
          <div className="h-[838px] bg-linear-to-r from-[#d2d1cf] to-[#a8a7a5]" />
        </div>
        <div className="flex w-[1858px] shrink-0 flex-col">
          <TitleBar />
          <TabBar />
          <NavBar />
          <Page />
        </div>
      </div>
    </div>
  );
}
